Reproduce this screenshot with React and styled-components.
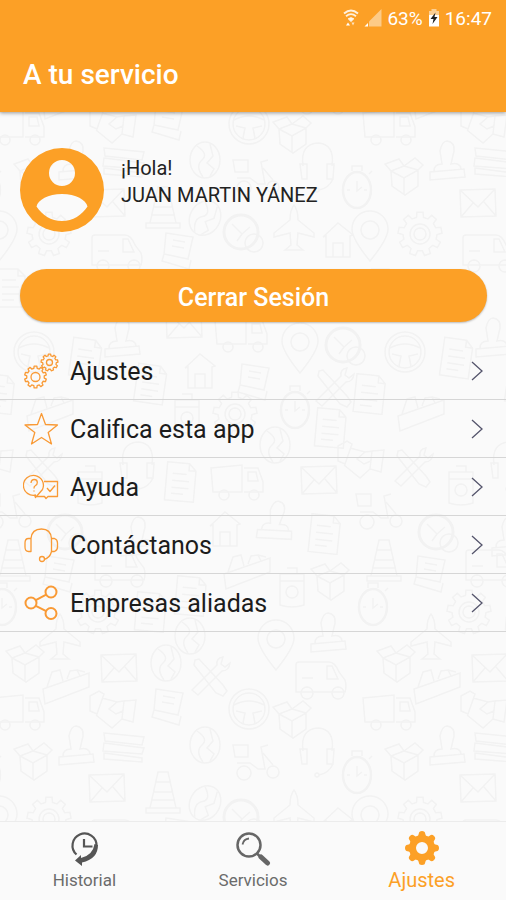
import React from "react";
import styled, { createGlobalStyle } from "styled-components";

const ORANGE = "#fca026";

const menu = [
  { label: "Ajustes", icon: <GearsIcon /> },
  { label: "Califica esta app", icon: <StarIcon /> },
  { label: "Ayuda", icon: <HelpIcon /> },
  { label: "Contáctanos", icon: <HeadsetIcon /> },
  { label: "Empresas aliadas", icon: <ShareIcon /> },
];

function App() {
  return (
    <>
      <GlobalStyle />
      <Screen>
        <Header>
          <StatusBar>
            <WifiIcon />
            <SignalIcon />
            <span>63%</span>
            <BatteryIcon />
            <span>16:47</span>
          </StatusBar>
          <h1>A tu servicio</h1>
        </Header>
        <Main>
          <Wallpaper />
          <Profile>
            <AvatarIcon />
            <p>
              ¡Hola!
              <br />
              JUAN MARTIN YÁNEZ
            </p>
          </Profile>
          <LogoutButton type="button">Cerrar Sesión</LogoutButton>
          <Menu>
            {menu.map((item) => (
              <li key={item.label}>
                <MenuLink href="#">
                  {item.icon}
                  <span>{item.label}</span>
                  <ChevronIcon />
                </MenuLink>
              </li>
            ))}
          </Menu>
        </Main>
        <BottomNav>
          <NavLink href="#">
            <HistoryIcon />
            <span>Historial</span>
          </NavLink>
          <NavLink href="#">
            <SearchIcon />
            <span>Servicios</span>
          </NavLink>
          <NavLink href="#" $active aria-current="page">
            <CogIcon />
            <span>Ajustes</span>
          </NavLink>
        </BottomNav>
      </Screen>
    </>
  );
}

// outline of a toothed wheel centred on cx, cy
function gearPath(cx, cy, outer, inner, teeth) {
  const points = [];
  const step = (Math.PI * 2) / teeth;
  for (let i = 0; i < teeth; i++) {
    [
      [-0.3, inner],
      [-0.2, outer],
      [0.2, outer],
      [0.3, inner],
    ].forEach(([offset, r]) => {
      const a = (i + offset) * step - Math.PI / 2;
      points.push(
        `${(cx + r * Math.cos(a)).toFixed(2)} ${(cy + r * Math.sin(a)).toFixed(2)}`
      );
    });
  }
  return `M${points.join("L")}Z`;
}

/* Status bar */

function WifiIcon() {
  return (
    <svg width="16" height="18" viewBox="0 0 16 18" fill="none" stroke="#fff">
      <path d="M1 4.5Q8-1.5 15 4.5" strokeWidth="2" opacity=".85" />
      <path d="M3 7.2Q8 3 13 7.2" strokeWidth="1.8" opacity=".85" />
      <path d="M5.2 9.8Q8 7.5 10.8 9.8L8 12.5Z" fill="#fff" opacity=".9" />
      <path d="M3 16.5l2-3 2 3z" fill="#fff" stroke="none" />
      <path d="M8.5 13.5h3l-1.5 3z" fill="#fff" stroke="none" opacity=".7" />
    </svg>
  );
}

function SignalIcon() {
  return (
    <svg width="18" height="18" viewBox="0 0 18 18">
      <path d="M17.5 0v17.5H5V12.5Z" fill="#fff" opacity=".45" />
      <path d="M4 14v3.5H.5Z" fill="#fff" />
    </svg>
  );
}

function BatteryIcon() {
  return (
    <svg width="12" height="18" viewBox="0 0 12 18">
      <path d="M3.5 0h5v2H11v5H1V2h2.5Z" fill="#fff" opacity=".5" />
      <path d="M1 6h10v11.5H1Z" fill="#fff" />
      <path d="M7.5 3.5L2.5 10h3L4.5 15l5-7H6.5Z" fill="#222" />
    </svg>
  );
}

/* Page icons */

function AvatarIcon() {
  return (
    <svg width="84" height="84" viewBox="0 0 84 84">
      <path
        fill={ORANGE}
        fillRule="evenodd"
        d="M42 0a42 42 0 1 1 0 84a42 42 0 1 1 0-84ZM42 12a13 13 0 1 0 0 26a13 13 0 1 0 0-26ZM42 46C28 46 18 52 16.5 58.5C22 67 31 73 42 73C53 73 62 67 67.5 58.5C66 52 56 46 42 46Z"
      />
    </svg>
  );
}

function GearsIcon() {
  return (
    <LineIcon viewBox="0 0 36 36">
      <path d={gearPath(12.5, 24, 11, 8.8, 10)} />
      <circle cx="12.5" cy="24" r="4.5" />
      <path d={gearPath(26.5, 9.5, 8.5, 6.8, 9)} />
      <circle cx="26.5" cy="9.5" r="3" />
    </LineIcon>
  );
}

function StarIcon() {
  return (
    <LineIcon viewBox="0 0 36 36">
      <path d="M18.5 2.5L22.5 13.5L34.5 14L25.2 21.5L28.5 33L18.5 26.5L8.5 33L11.8 21.5L2 14L14.5 13.5Z" />
    </LineIcon>
  );
}

function HelpIcon() {
  return (
    <LineIcon viewBox="0 0 36 36">
      <path d="M13 26A10 10 0 1 1 19.5 20.5M19.5 20.5L12.5 28.5L11.5 26" />
      <path d="M8 14q.3-3.5 3.3-3.5q3 0 3 3q0 2-1.8 3t-1.5 3M11 21.5v1" />
      <path d="M21 12.5H34.5V27.5H25L23 29.5L21.5 27.5H14M24 19l3 3.5l5-6" />
    </LineIcon>
  );
}

function HeadsetIcon() {
  return (
    <LineIcon viewBox="0 0 36 36">
      <path d="M8 11.5V24.5H5.5Q2 24.5 2 20V16Q2 11.5 5.5 11.5H8C8.5 5.5 12.5 2 18.5 2S28 5.5 28.5 11.5V24.5Q27 31 21 32.5" />
      <path d="M28.5 11.5H31.5Q34.5 12.5 34.5 16V20Q34.5 23.5 31.5 24.5H28.5" />
      <circle cx="19" cy="32" r="2.5" />
    </LineIcon>
  );
}

function ShareIcon() {
  return (
    <LineIcon viewBox="0 0 36 36" $weight={2}>
      <circle cx="8" cy="18" r="5.5" />
      <circle cx="28" cy="7" r="5.5" />
      <circle cx="28" cy="28.5" r="5.5" />
      <path d="M12.8 15.2L23.2 9.7M12.8 20.8L23.2 26.2" />
    </LineIcon>
  );
}

function ChevronIcon() {
  return (
    <svg width="12" height="20" viewBox="0 0 12 20" fill="none" stroke="#55556c">
      <path d="M1 1L11 10L1 19" strokeWidth="1.3" />
    </svg>
  );
}

function HistoryIcon() {
  return (
    <svg width="36" height="36" viewBox="0 0 36 36" fill="none" stroke="#555">
      <path d="M10.5 24.5A12 12 0 1 1 30.5 16" strokeWidth="2.2" />
      <path d="M18 9v7.500h8.500" strokeWidth="2.2" />
      <path
        d="M28.5 14L32 15Q32 29 16 32.500V36L9 30.500L15 25V28Q27 25 28.5 14Z"
        fill="#555"
        stroke="none"
      />
    </svg>
  );
}

function SearchIcon() {
  return (
    <svg width="36" height="36" viewBox="0 0 36 36" fill="none" stroke="#666">
      <circle cx="14" cy="15" r="11.5" strokeWidth="2.5" />
      <path d="M7.5 14.5Q8.5 9 14 8.5" strokeWidth="1.8" />
      <path d="M22 23.5L26 27.5" strokeWidth="2.5" />
      <path d="M26 27L32.5 33" strokeWidth="5" strokeLinecap="round" />
    </svg>
  );
}

function CogIcon() {
  const teeth = [0, 45, 90, 135, 180, 225, 270, 315];
  return (
    <svg width="36" height="36" viewBox="0 0 36 36" fill={ORANGE}>
      <circle cx="18" cy="18" r="9.5" fill="none" stroke={ORANGE} strokeWidth="7" />
      {teeth.map((angle) => (
        <path
          key={angle}
          d="M12.8 7Q14.6 6 14.8 3.5Q15 1 18 1T21.2 3.500Q21.4 6 23.2 7Z"
          transform={`rotate(${angle} 18 18)`}
        />
      ))}
    </svg>
  );
}

/* Wallpaper */

const doodles = {
  truck: (
    <>
      <path d="M-25-14L6-17V10H-23ZM8-14H22L27 0V10H8M12-10H20L22-1H12Z" />
      <circle cx="-12" cy="13" r="5" />
      <circle cx="18" cy="13" r="5" />
    </>
  ),
  van: (
    <>
      <path d="M-25 10V-17Q-25-20-22-20H8Q14-20 18-10L24-2Q26 4 24 10ZM6-16H11L17-3H6ZM-19-4H-8" />
      <circle cx="-14" cy="11" r="6" />
      <circle cx="17" cy="11" r="6" />
    </>
  ),
  mail: <path d="M-18-13L17-14L18 13L-17 14ZM-18-13L0 4L17-14M-17 14L-5 0M18 13L6-1" />,
  gear: (
    <>
      <path d={gearPath(0, 0, 22, 17, 9)} />
      <circle r="10" />
      <circle r="6" />
    </>
  ),
  wheel: (
    <>
      <circle r="20" />
      <circle r="16" />
      <path d="M-15-4Q0-12 15-4M-13 2L-4 4L-6 14M13 2L4 4L6 14" />
    </>
  ),
  pin: (
    <>
      <path d="M0 26Q-18 4-18-6A18 18 0 0 1 18-6Q18 4 0 26Z" />
      <circle cy="-5" r="9" />
    </>
  ),
  house: <path d="M-15-4L0-18L15-6L12-5V16H-12V-5ZM-5 16V2H5V16" />,
  clock: (
    <>
      <circle r="17" strokeWidth="3" />
      <path d="M-9-8L1 2L9-5M1 2L-4 9" />
      <circle cx="13" cy="11" r="9" />
    </>
  ),
  watch: (
    <>
      <ellipse cy="3" rx="14" ry="18" strokeWidth="2.5" />
      <path d="M-5-16V-21H5V-16M0-6V4L5 0M-10 3H-7M7 3H10M12-13L15-16" />
    </>
  ),
  globe: (
    <>
      <ellipse rx="15" ry="18" />
      <path d="M-8-14Q4-6-3 0T-2 17M5-16L8-4L2 3L9 9L5 16" />
    </>
  ),
  headset: (
    <>
      <path d="M-14 0Q-17-22 1-23Q18-22 15 0M-17-2H-10V13H-15ZM17-2H10V13H16ZM16 13Q12 22 2 24" />
      <circle r="2" cy="24" />
    </>
  ),
  stamp: <path d="M-17 12L17 9L18 17L-17 20ZM-13 11Q-13 4-5 4L-7-9Q-5-19 0-19Q8-18 7-9L4 4Q13 2 14 9" />,
  box: <path d="M-13-4L0 3L14-5V11L1 20L-12 11ZM-13-4L-19-11L-5-16L0-9L11-17L19-10L14-5M0 3V20M0-9L-13-4M0-9L14-5" />,
  money: <path d="M-20-12L20-8L18 0L-19-4ZM-20-2L20 3L18 9L-21 6ZM-20 8L18 13V17L-20 14Z" />,
  cone: <path d="M-5-20H5L13 16H-13ZM-8-10H7M-10 0H10M-12 8H12M-17 16H17V21H-17Z" />,
  plane: <path d="M0-23Q4-18 4-8L20 5V9L4 5L3 17L9 22H-9L-3 17L-4 5L-20 9V5L-4-8Q-4-18 0-23Z" />,
  scooter: (
    <>
      <path d="M-22-16H-7V-4H-20ZM-18 2H-5L3 8H10L6-14L13-16M8-8L18 4" />
      <circle cx="-11" cy="12" r="7" />
      <circle cx="18" cy="11" r="6" />
    </>
  ),
  hands: <path d="M-24-14L-15-19L-10-16L-17 4L-24 1ZM-12-12L3-8L10-9L8 9L-2 18L-18 5M3-8L-5-1L2 4L9 1M10-9L22-10L19 12L8 9" />,
  receipt: <path d="M-12-18L15-14L10 8L-14 3ZM-14 3L-16 10L11 18L13 9M-5-11L7-9M-6-5L6-3" />,
  doc: <path d="M-14-19H8L15-12V19H-14ZM8-19V-12H15M-8-8H6M-8-1H9M-8 6H9M-8 12H4" />,
  tools: <path d="M-17 13L8-12Q7-19 14-20L12-13L16-10L21-14Q20-6 13-6L-11 18ZM-14-17L-10-18L14 8L18 14L14 19L7 16L-15-12Z" />,
  toolbox: <path d="M-22 2L24-14V0L-20 17ZM-18 0L-13-15L-5-17L-2-6M2-8L5-16L12-17L15-11M12-17L20-15" />,
  camera: (
    <>
      <path d="M-12-16H12V15Q0 19-12 15ZM-12-9H12M-5-22H5V-16" />
      <circle r="6" cy="2" />
    </>
  ),
};

const TILE = { width: 371, height: 585 };

// kind, x, y, turn: y counts from the lower edge of the header
const places = [
  ["headset", 317, 54], ["watch", 357, 75], ["box", 404, 63], ["stamp", 76, 48],
  ["money", 124, 48], ["scooter", 255, 64], ["globe", 205, 48], ["mail", 107, 91],
  ["cone", 163, 95], ["globe", 205, 106, 30], ["clock", 241, 120], ["plane", 294, 116],
  ["house", 338, 129], ["pin", 370, 123], ["gear", 420, 122], ["van", 117, 143],
  ["receipt", 178, 139], ["doc", 10, 176], ["truck", 60, 188], ["mail", 230, 180],
  ["wheel", 34, 240], ["doc", 85, 246, 8], ["stamp", 122, 225], ["mail", 184, 212],
  ["truck", 240, 222], ["pin", 300, 235], ["clock", 343, 233], ["doc", 150, 272, 8],
  ["house", 200, 260], ["receipt", 254, 270], ["tools", 333, 276], ["doc", 369, 282, 6],
  ["toolbox", 420, 302], ["watch", 295, 295], ["gear", 235, 302], ["camera", 187, 304],
  ["globe", 275, 333], ["doc", 330, 316, 5], ["hands", 362, 348], ["tools", 412, 356],
  ["headset", 137, 353], ["camera", 461, 376], ["doc", 180, 370, 5], ["truck", 236, 370],
  ["mail", 319, 368], ["stamp", 276, 408, 8], ["scooter", 378, 398], ["clock", 436, 420],
  ["cone", 384, 448], ["stamp", 138, 424], ["house", 225, 418], ["doc", 324, 422, 6],
  ["van", 120, 458], ["receipt", 430, 462], ["toolbox", 246, 460], ["camera", 292, 478],
  ["box", 330, 468], ["watch", 373, 492], ["gear", 469, 500], ["doc", 190, 484, 5],
  ["doc", 150, 500, 5], ["plane", 60, 525], ["pin", 276, 532], ["stamp", 328, 520],
  ["globe", 190, 524], ["box", 396, 550], ["mail", 119, 556], ["globe", 166, 551],
  ["tools", 209, 565], ["toolbox", 436, 575], ["truck", 388, 600], ["hands", 114, 598],
  ["receipt", 168, 595], ["wheel", 249, 597], ["van", 321, 570], ["box", 292, 606],
];

function Wallpaper() {
  return (
    <WallpaperStyled aria-hidden="true">
      <defs>
        <g id="doodles">
          {places.map(([kind, x, y, turn = 0]) => (
            <g key={`${x}-${y}`} transform={`translate(${x} ${y}) rotate(${turn})`}>
              {doodles[kind]}
            </g>
          ))}
        </g>
        <pattern id="tile" {...TILE} patternUnits="userSpaceOnUse">
          <use href="#doodles" />
          <use href="#doodles" x={-TILE.width} />
          <use href="#doodles" y={-TILE.height} />
          <use href="#doodles" x={-TILE.width} y={-TILE.height} />
        </pattern>
      </defs>
      <rect width="100%" height="100%" fill="url(#tile)" stroke="none" />
    </WallpaperStyled>
  );
}

const GlobalStyle = createGlobalStyle`
  * {
    box-sizing: border-box;
  }
  body {
    margin: 0;
    background: #fafafa;
    font-family: Roboto, "Liberation Sans", sans-serif;
  }
  svg {
    flex-shrink: 0;
  }
`;

const Screen = styled.div`
  display: flex;
  flex-direction: column;
  min-height: 100vh;
`;

const Header = styled.header`
  position: relative;
  z-index: 1;
  padding-bottom: 19px;
  background: ${ORANGE};
  color: #fff;
  box-shadow: 0 1px 4px rgba(0, 0, 0, 0.4);
  h1 {
    margin: 21px 23px 0;
    font-size: 28px;
    line-height: 36px;
    font-weight: 500;
  }
`;

const StatusBar = styled.div`
  display: flex;
  align-items: center;
  justify-content: flex-end;
  gap: 5px;
  height: 36px;
  padding-right: 14px;
  font-size: 19px;
`;

const Main = styled.main`
  position: relative;
  flex: 1;
  display: flex;
  flex-direction: column;
  padding-top: 36px;
`;

const WallpaperStyled = styled.svg`
  position: absolute;
  inset: 0;
  z-index: -1;
  width: 100%;
  height: 100%;
  fill: none;
  stroke: #f2f2f2;
  stroke-width: 1.5;
`;

const Profile = styled.section`
  display: flex;
  gap: 17px;
  padding: 0 20px;
  p {
    margin: 7px 0 0;
    font-size: 20px;
    line-height: 27px;
    color: #222;
  }
`;

const LogoutButton = styled.button`
  height: 53px;
  margin: 37px 19px 20px 20px;
  padding: 3px 0 0;
  border: none;
  border-radius: 27px;
  background: ${ORANGE};
  box-shadow: 0 1px 2px rgba(0, 0, 0, 0.25);
  color: #fff;
  font-family: inherit;
  font-size: 25px;
  font-weight: 500;
  cursor: pointer;
`;

const Menu = styled.ul`
  margin: 0;
  padding: 0;
  list-style: none;
`;

const MenuLink = styled.a`
  display: flex;
  align-items: center;
  gap: 11px;
  height: 58px;
  padding: 0 23px;
  border-bottom: 1px solid #d6d6d6;
  color: #1c1c1c;
  font-size: 25px;
  text-decoration: none;
  span {
    flex: 1;
    padding-top: 2px;
  }
`;

const LineIcon = styled.svg`
  width: 36px;
  height: 36px;
  fill: none;
  stroke: #f99a35;
  stroke-width: ${(props) => props.$weight || 1.3};
  stroke-linejoin: round;
`;

const BottomNav = styled.nav`
  display: flex;
  height: 79px;
  background: #fafafa;
  border-top: 1px solid #ececec;
`;

const NavLink = styled.a`
  flex: 1;
  display: flex;
  flex-direction: column;
  align-items: center;
  padding-top: 8px;
  color: ${(props) => (props.$active ? ORANGE : "#6b6b6b")};
  font-size: ${(props) => (props.$active ? "20px" : "17px")};
  line-height: 28px;
  text-decoration: none;
`;

export default App;
